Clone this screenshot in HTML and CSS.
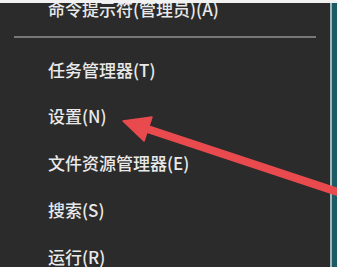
FILE: index.html
```html
<!DOCTYPE html>
<html lang="zh-CN">
<head>
<meta charset="utf-8">
<link rel="stylesheet" href="styles.css">
</head>
<body>
<div class="screen">
  <div class="topstrip"></div>
  <div class="main">
    <div class="menu">
      <div class="item first">命令提示符(管理员)(A)</div>
      <div class="sep"></div>
      <div class="item r46">任务管理器(T)</div>
      <div class="item r46">设置(N)</div>
      <div class="item r47">文件资源管理器(E)</div>
      <div class="item r47">搜索(S)</div>
      <div class="item r47">运行(R)</div>
    </div>
    <div class="edge"></div>
    <div class="desk"></div>
  </div>
  <svg class="arrow" width="337" height="267" viewBox="0 0 337 267">
    <line x1="146" y1="128.5" x2="350" y2="196" stroke="#e84a4e" stroke-width="8" stroke-linecap="butt"/>
    <polygon points="123,121 152,117 144,141" fill="#e84a4e" stroke="#e84a4e" stroke-width="1.5" stroke-linejoin="round"/>
  </svg>
</div>
</body>
</html>
```

FILE: styles.css
```css
html, body {
  margin: 0;
  padding: 0;
  background: #2a2a2a;
}
.screen {
  position: relative;
  width: 337px;
  height: 267px;
  overflow: hidden;
  display: flex;
  flex-direction: column;
  font-family: "Noto Sans CJK SC", "Microsoft YaHei", sans-serif;
}
.topstrip {
  height: 3px;
  background: #f2f2f2;
  flex: none;
  position: relative;
  z-index: 2;
}
.main {
  flex: 1;
  display: flex;
  min-height: 0;
}
.menu {
  width: 330px;
  background: #2b2b2b;
  display: flex;
  flex-direction: column;
  overflow: hidden;
}
.item {
  flex: none;
  padding-left: 48px;
  font-size: 17px;
  font-weight: 500;
  color: #e9e9e9;
  white-space: nowrap;
}
.first {
  height: 11px;
  line-height: 11px;
}
.r46 { height: 46px; line-height: 46px; }
.r47 { height: 47px; line-height: 47px; }
.sep {
  flex: none;
  height: 2px;
  margin: 22px 14px 9px 14px;
  background: #787878;
}
.edge {
  width: 2px;
  background: #9db6ba;
}
.desk {
  flex: 1;
  background: #1c5a66;
}
.arrow {
  position: absolute;
  left: 0;
  top: 0;
  z-index: 3;
}
```
